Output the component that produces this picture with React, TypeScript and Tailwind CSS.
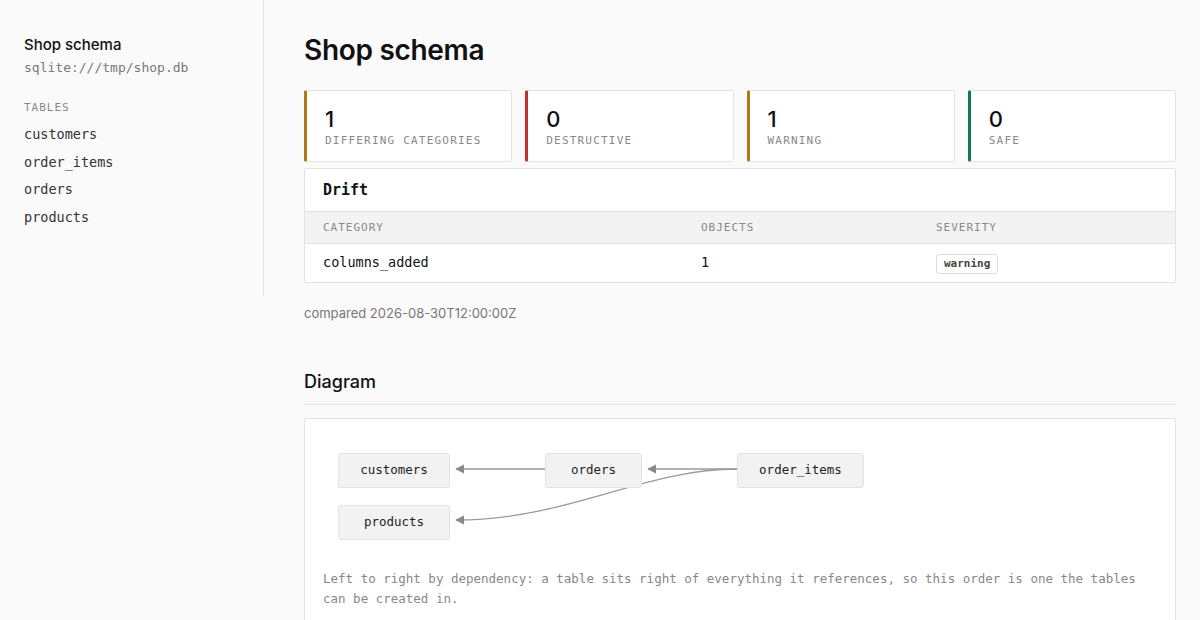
const mono = "font-['DejaVu_Sans_Mono','Liberation_Mono',monospace]"

interface Stat {
  value: number
  label: string
  accent: string
}

const stats: Stat[] = [
  { value: 1, label: 'Differing categories', accent: 'border-l-[#b07a12]' },
  { value: 0, label: 'Destructive', accent: 'border-l-[#c0302f]' },
  { value: 1, label: 'Warning', accent: 'border-l-[#b07a12]' },
  { value: 0, label: 'Safe', accent: 'border-l-[#0f7a50]' }
]

const tables = ['customers', 'order_items', 'orders', 'products']

// node boxes on the diagram canvas, x/y in canvas pixels
const nodes = [
  { name: 'customers', x: 15, y: 18, w: 112 },
  { name: 'products', x: 15, y: 70, w: 112 },
  { name: 'orders', x: 222, y: 18, w: 97 },
  { name: 'order_items', x: 414, y: 18, w: 127 }
]

const Sidebar = () => (
  <aside className="w-[264px] shrink-0 border-r border-[#e2e2e2] h-[296px] pl-6 pt-[35px]">
    <div className="text-[15px] font-medium text-[#111] leading-5">Shop schema</div>
    <div className={`${mono} text-[13px] text-[#777] mt-[3px] leading-5`}>sqlite:///tmp/shop.db</div>
    <div className={`${mono} text-[11px] tracking-[1px] text-[#888] mt-[22px] leading-4`}>TABLES</div>
    <ul className="mt-[5px]">
      {tables.map((t) => (
        <li key={t} className={`${mono} text-[13.5px] text-[#333] h-[27.7px] leading-[27.7px]`}>
          {t}
        </li>
      ))}
    </ul>
  </aside>
)

const Diagram = () => (
  <div className="relative h-[124px]">
    <svg className="absolute inset-0" width="860" height="124">
      <defs>
        <marker id="head" viewBox="0 0 10 10" refX="9" refY="5" markerWidth="7" markerHeight="7" orient="auto">
          <path d="M0 0 L10 5 L0 10 z" fill="#8a8a8a" />
        </marker>
      </defs>
      <g stroke="#9a9a9a" strokeWidth="1.3" fill="none">
        <path d="M222 34 L133 34" markerEnd="url(#head)" />
        <path d="M414 34 L325 34" markerEnd="url(#head)" />
        <path d="M414 34 C320 34 245 85 133 85" markerEnd="url(#head)" />
      </g>
    </svg>
    {nodes.map((n) => (
      <div
        key={n.name}
        className={`${mono} absolute h-[35px] flex items-center justify-center rounded-[3px] border border-[#e2e2e2] bg-[#f2f2f2] text-[12.5px] text-[#222]`}
        style={{ left: n.x, top: n.y, width: n.w }}
      >
        {n.name}
      </div>
    ))}
  </div>
)

export default function App() {
  return (
    <div className="min-h-[620px] bg-[#fafafa] flex font-['Inter','Liberation_Sans',sans-serif] text-[#111]">
      <Sidebar />

      <main className="flex-1 pl-10 pr-6 pt-[32px]">
        <h1 className="text-[28px] font-semibold leading-9 tracking-[-0.3px]">Shop schema</h1>

        {/* summary cards */}
        <div className="grid grid-cols-4 gap-[13px] mt-[22px]">
          {stats.map((s) => (
            <div key={s.label} className={`h-[72px] bg-white border border-[#e2e2e2] border-l-[3px] ${s.accent} rounded-[2px] pl-[18px] pt-[14px]`}>
              <div className="text-[22px] font-medium leading-7">{s.value}</div>
              <div className={`${mono} text-[11px] uppercase tracking-[1.2px] text-[#888] leading-4`}>{s.label}</div>
            </div>
          ))}
        </div>

        {/* drift table */}
        <div className="mt-[6px] bg-white border border-[#e2e2e2] rounded-[2px]">
          <div className={`${mono} h-[42px] flex items-center px-[18px] text-[15px] font-bold`}>Drift</div>
          <div className={`${mono} grid grid-cols-[378px_235px_1fr] h-[33px] items-center bg-[#f3f3f3] border-y border-[#e2e2e2] text-[11px] tracking-[1px] text-[#888] pt-[1px]`}>
            <div className="px-[18px]">CATEGORY</div>
            <div className="px-[18px]">OBJECTS</div>
            <div className="px-[18px]">SEVERITY</div>
          </div>
          <div className={`${mono} grid grid-cols-[378px_235px_1fr] h-[38px] items-center text-[13.5px] text-[#111] pb-[1px]`}>
            <div className="px-[18px]">columns_added</div>
            <div className="px-[18px]">1</div>
            <div className="px-[18px]">
              <span className="inline-block border border-[#dcdcdc] rounded-[3px] px-[7px] leading-[18px] text-[11px] font-bold text-[#444]">warning</span>
            </div>
          </div>
        </div>

        <div className="text-[13px] text-[#777] mt-[21px]">compared 2026-08-30T12:00:00Z</div>

        <h2 className="text-[18px] font-medium mt-[46px] pb-[10px] border-b border-[#e2e2e2] leading-6">Diagram</h2>

        <div className="mt-[13px] bg-white border border-[#e2e2e2] rounded-[2px] px-[18px] pt-4 pb-5">
          <Diagram />
          <p className={`${mono} mt-[10px] text-[12.5px] leading-5 text-[#888]`}>
            Left to right by dependency: a table sits right of everything it references, so this order is one the tables can be created in.
          </p>
        </div>
      </main>
    </div>
  )
}
